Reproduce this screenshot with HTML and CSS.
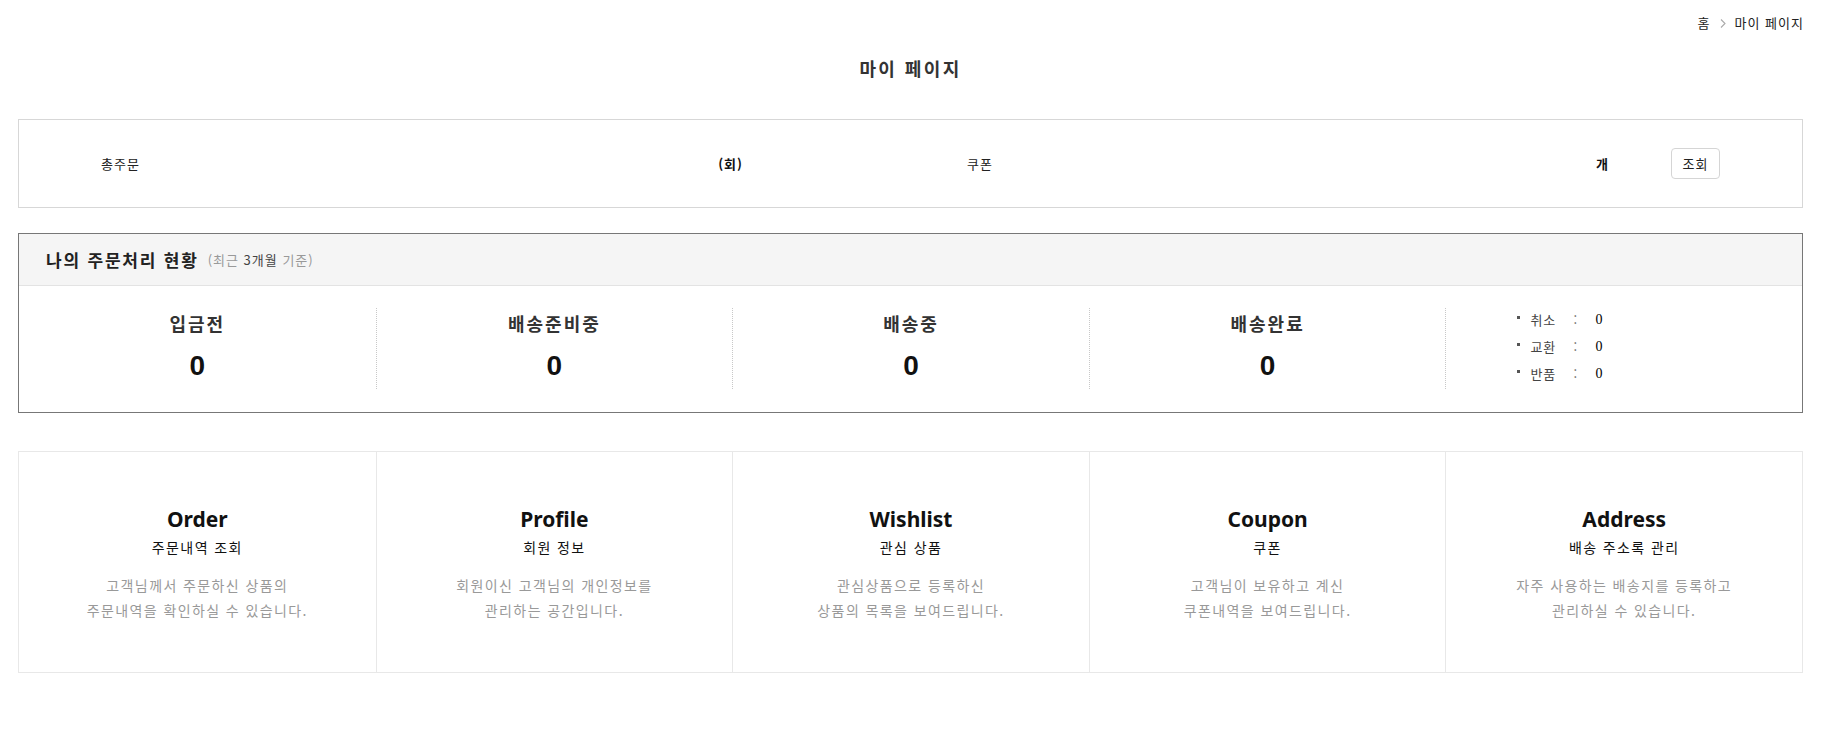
FILE: index.html
```html
<!DOCTYPE html>
<html lang="ko">
<head>
<meta charset="utf-8">
<title>마이 페이지</title>
<link rel="stylesheet" href="styles.css">
</head>
<body>
<div class="page">
  <div class="crumbs">
    <span>홈</span>
    <svg class="chev" width="6" height="9" viewBox="0 0 6 9"><path d="M1 0.5 L5 4.5 L1 8.5" fill="none" stroke="#aaa" stroke-width="1.1"/></svg>
    <span>마이 페이지</span>
  </div>
  <h1 class="title">마이 페이지</h1>

  <div class="summary">
    <span class="s-label">총주문</span>
    <span class="s-val"><b>(회)</b></span>
    <span class="s-label s-label2">쿠폰</span>
    <span class="s-val"><b>개</b></span>
    <button class="s-btn">조회</button>
  </div>

  <div class="status">
    <div class="status-head">
      <strong>나의 주문처리 현황</strong>
      <span class="sub">(최근 <em>3개월</em> 기준)</span>
    </div>
    <div class="status-body">
      <div class="st-col"><div class="st-label">입금전</div><div class="st-num">0</div></div>
      <div class="st-col"><div class="st-label">배송준비중</div><div class="st-num">0</div></div>
      <div class="st-col"><div class="st-label">배송중</div><div class="st-num">0</div></div>
      <div class="st-col"><div class="st-label">배송완료</div><div class="st-num">0</div></div>
      <div class="st-col st-list">
        <ul>
          <li><span class="k">취소</span><span class="c">:</span><span class="v">0</span></li>
          <li><span class="k">교환</span><span class="c">:</span><span class="v">0</span></li>
          <li><span class="k">반품</span><span class="c">:</span><span class="v">0</span></li>
        </ul>
      </div>
    </div>
  </div>

  <div class="menu">
    <div class="cell"><h3>Order</h3><p class="ko">주문내역 조회</p><p class="desc">고객님께서 주문하신 상품의<br>주문내역을 확인하실 수 있습니다.</p></div>
    <div class="cell"><h3>Profile</h3><p class="ko">회원 정보</p><p class="desc">회원이신 고객님의 개인정보를<br>관리하는 공간입니다.</p></div>
    <div class="cell"><h3>Wishlist</h3><p class="ko">관심 상품</p><p class="desc">관심상품으로 등록하신<br>상품의 목록을 보여드립니다.</p></div>
    <div class="cell"><h3>Coupon</h3><p class="ko">쿠폰</p><p class="desc">고객님이 보유하고 계신<br>쿠폰내역을 보여드립니다.</p></div>
    <div class="cell"><h3>Address</h3><p class="ko">배송 주소록 관리</p><p class="desc">자주 사용하는 배송지를 등록하고<br>관리하실 수 있습니다.</p></div>
  </div>
</div>
</body>
</html>
```

FILE: styles.css
```css
* { box-sizing: border-box; }
body {
  margin: 0;
  background: #fff;
  color: #222;
  font-family: "Noto Sans", "Noto Sans CJK KR", sans-serif;
}
.page {
  width: 1785px;
  margin-left: 18px;
  padding-bottom: 40px;
}
.crumbs {
  display: flex;
  justify-content: flex-end;
  align-items: center;
  gap: 9px;
  padding-top: 14px;
  height: 32px;
  font-size: 13px;
  letter-spacing: 1px;
  line-height: 18px;
  color: #222;
  font-family: "Noto Sans CJK KR", sans-serif;
}
.crumbs span:last-child { margin-right: -1px; }
.crumbs .chev { display: block; }
.title {
  margin: 23px 0 0;
  text-align: center;
  font-size: 18px;
  letter-spacing: 2.4px;
  line-height: 26px;
  font-weight: 700;
  color: #333;
  font-family: "Noto Sans CJK KR", sans-serif;
}

.summary {
  margin-top: 38px;
  height: 89px;
  border: 1px solid #d7d7d7;
  display: flex;
  align-items: center;
  padding-left: 82px;
  font-size: 13px;
  letter-spacing: 1px;
  color: #222;
  font-family: "Noto Sans CJK KR", sans-serif;
}
.s-label { width: 150px; }
.s-label2 { margin-left: 224px; }
.s-val { width: 492px; text-align: right; }
.s-val b { font-weight: 700; color: #111; }
.s-btn {
  margin-left: 62px;
  width: 49px;
  height: 31px;
  border: 1px solid #d5d5d5;
  border-radius: 4px;
  background: #fff;
  font: 13px "Noto Sans CJK KR", sans-serif;
  letter-spacing: 1px;
  color: #222;
  padding: 0;
}

.status {
  margin-top: 25px;
  border: 1px solid #777;
  font-family: "Noto Sans CJK KR", sans-serif;
}
.status-head {
  height: 52px;
  background: #f5f5f5;
  border-bottom: 1px solid #e3e3e3;
  display: flex;
  align-items: center;
  padding-left: 27px;
}
.status-head strong {
  font-size: 17px;
  letter-spacing: 1.8px;
  font-weight: 700;
  color: #222;
}
.status-head .sub {
  margin-left: 9px;
  font-size: 13px;
  letter-spacing: 1px;
  color: #999;
}
.status-head .sub em { font-style: normal; color: #444; }
.status-body {
  display: grid;
  grid-template-columns: repeat(5, 1fr);
  padding: 22px 0;
  height: 126px;
}
.st-col {
  height: 81px;
  text-align: center;
  border-left: 1px dotted #c8c8c8;
}
.st-col:first-child { border-left: none; }
.st-label {
  font-size: 18px;
  letter-spacing: 2px;
  line-height: 30px;
  font-weight: 700;
  color: #333;
}
.st-num {
  margin-top: 10px;
  font-family: "Liberation Sans", Arial, sans-serif;
  font-size: 28px;
  line-height: 36px;
  font-weight: 700;
  color: #111;
}
.st-list { text-align: left; padding-left: 71px; }
.st-list ul {
  list-style: none;
  margin: -2px 0 0;
  padding: 0;
}
.st-list li {
  display: flex;
  align-items: center;
  height: 27px;
  font-size: 13px;
  letter-spacing: 1px;
  color: #444;
}
.st-list li::before {
  content: "";
  width: 3px;
  height: 3px;
  background: #555;
  margin-right: 10px;
  margin-top: -4px;
}
.st-list .k { width: 43px; }
.st-list .c { width: 22px; color: #666; }
.st-list .v {
  font-family: "Liberation Serif", "Times New Roman", serif;
  font-size: 14px;
  color: #000;
}

.menu {
  margin-top: 38px;
  display: grid;
  grid-template-columns: repeat(5, 1fr);
  border: 1px solid #e8e8e8;
  height: 222px;
}
.cell {
  text-align: center;
  border-left: 1px solid #e8e8e8;
  padding-top: 52px;
}
.cell:first-child { border-left: none; }
.cell h3 {
  margin: 0;
  font-size: 21px;
  line-height: 30px;
  font-weight: 700;
  color: #111;
}
.cell .ko {
  margin: 2px 0 0;
  font-family: "Noto Sans CJK KR", sans-serif;
  font-size: 14px;
  letter-spacing: 1.4px;
  line-height: 22px;
  color: #111;
}
.cell .desc {
  margin: 15px 0 0;
  font-family: "Noto Sans CJK KR", sans-serif;
  font-size: 14px;
  letter-spacing: 1.4px;
  line-height: 25px;
  color: #999;
}
```
